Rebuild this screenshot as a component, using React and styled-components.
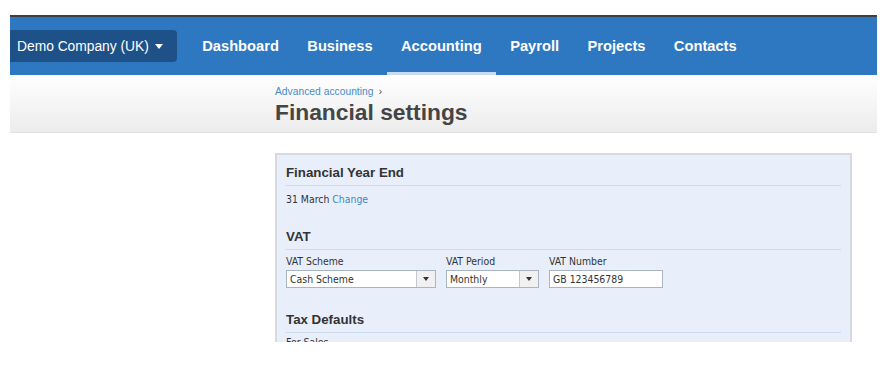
import React from "react";
import styled, { createGlobalStyle } from "styled-components";

const GlobalStyle = createGlobalStyle`
  html, body { margin: 0; padding: 0; background: #ffffff; }
  body { font-family: "Liberation Sans", Arial, sans-serif; }
  * { box-sizing: border-box; }
`;

const Frame = styled.div`
  margin: 15px 9px 0 10px;
  height: 327px;
  overflow: hidden;
  background: #ffffff;
`;

const TopBar = styled.div`
  display: flex;
  align-items: center;
  height: 60px;
  border-top: 2px solid #3d3f44;
  background: #2e77c1;
`;

const CompanyButton = styled.div`
  display: flex;
  align-items: center;
  gap: 6px;
  width: 167px;
  height: 32px;
  padding-left: 7px;
  background: #1f5189;
  border-radius: 0 4px 4px 0;
  color: #ffffff;
  font-size: 13.8px;
  white-space: nowrap;
`;

const Caret = styled.span`
  width: 0;
  height: 0;
  border-left: 4.5px solid transparent;
  border-right: 4.5px solid transparent;
  border-top: 5px solid #ffffff;
`;

const Nav = styled.nav`
  display: flex;
  align-self: stretch;
  margin-left: 11px;
`;

const NavItem = styled.div`
  display: flex;
  align-items: center;
  padding: 3px 14.2px 0;
  color: #ffffff;
  font-weight: bold;
  font-size: 14.7px;
  border-bottom: 3px solid ${(p) => (p.$active ? "#c6dcf2" : "transparent")};
`;

const Header = styled.div`
  height: 58px;
  padding-left: 265px;
  padding-top: 10px;
  background: linear-gradient(#ffffff, #ececec);
  border-bottom: 1px solid #e2e2e2;
`;

const Crumb = styled.div`
  display: flex;
  align-items: center;
  gap: 5px;
  font-size: 10.3px;
  color: #4a8acb;
  span { color: #555; font-size: 11px; }
`;

const Title = styled.h1`
  margin: 2px 0 0;
  font-size: 22.8px;
  line-height: 26px;
  font-weight: bold;
  color: #454545;
`;

const Panel = styled.div`
  margin: 20px 0 0 265px;
  width: 577px;
  background: #e8effb;
  border: 2px solid #d6d9de;
  border-bottom: none;
  padding: 10px 9px 0 9px;
  font-family: "DejaVu Sans Condensed", "DejaVu Sans", sans-serif;
  font-size: 10.4px;
  color: #333;
`;

const Section = styled.section`
  margin-bottom: ${(p) => p.$gap || 0}px;
`;

const SectionTitle = styled.h2`
  margin: 0;
  padding-bottom: 5px;
  font-family: "Liberation Sans", Arial, sans-serif;
  font-size: 13.3px;
  font-weight: bold;
  color: #333;
  border-bottom: 1px solid #cbdaee;
`;

const Line = styled.div`
  margin-top: ${(p) => p.$top ?? 7}px;
  a { color: #3e87c9; text-decoration: none; }
`;

const FieldRow = styled.div`
  display: flex;
  gap: 10px;
  margin-top: 5px;
`;

const Field = styled.div`
  display: flex;
  flex-direction: column;
  gap: 3px;
`;

const Box = styled.div`
  display: flex;
  align-items: stretch;
  width: ${(p) => p.$w}px;
  height: 18px;
  background: #ffffff;
  border: 1px solid #a9b5c3;
`;

const Value = styled.div`
  flex: 1;
  display: flex;
  align-items: center;
  padding-left: 3px;
  white-space: nowrap;
`;

const ArrowButton = styled.div`
  width: 19px;
  display: flex;
  align-items: center;
  justify-content: center;
  background: #f1f1f1;
  border-left: 1px solid #c4c9cf;
  &::after {
    content: "";
    border-left: 3.5px solid transparent;
    border-right: 3.5px solid transparent;
    border-top: 4px solid #333;
  }
`;

const Select = ({ w, value }) => (
  <Box $w={w}>
    <Value>{value}</Value>
    <ArrowButton />
  </Box>
);

export default function App() {
  return (
    <>
      <GlobalStyle />
      <Frame>
        <TopBar>
          <CompanyButton>
            Demo Company (UK) <Caret />
          </CompanyButton>
          <Nav>
            <NavItem>Dashboard</NavItem>
            <NavItem>Business</NavItem>
            <NavItem $active>Accounting</NavItem>
            <NavItem>Payroll</NavItem>
            <NavItem>Projects</NavItem>
            <NavItem>Contacts</NavItem>
          </Nav>
        </TopBar>
        <Header>
          <Crumb>
            Advanced accounting <span>›</span>
          </Crumb>
          <Title>Financial settings</Title>
        </Header>
        <Panel>
          <Section $gap={24}>
            <SectionTitle>Financial Year End</SectionTitle>
            <Line>
              31 March <a href="#">Change</a>
            </Line>
          </Section>
          <Section $gap={24}>
            <SectionTitle>VAT</SectionTitle>
            <FieldRow>
              <Field>
                <span>VAT Scheme</span>
                <Select w={150} value="Cash Scheme" />
              </Field>
              <Field>
                <span>VAT Period</span>
                <Select w={93} value="Monthly" />
              </Field>
              <Field>
                <span>VAT Number</span>
                <Box $w={114}>
                  <Value>GB 123456789</Value>
                </Box>
              </Field>
            </FieldRow>
          </Section>
          <Section>
            <SectionTitle>Tax Defaults</SectionTitle>
            <Line $top={3}>For Sales</Line>
          </Section>
        </Panel>
      </Frame>
    </>
  );
}
